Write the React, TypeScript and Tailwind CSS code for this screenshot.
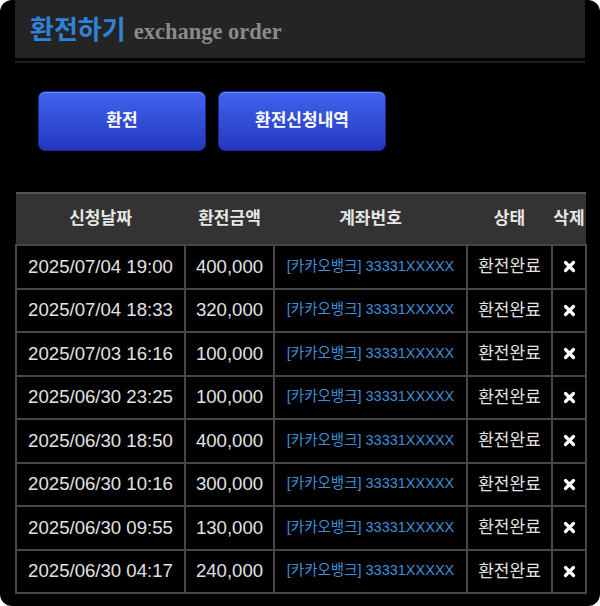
const FONT = '"Liberation Sans", "Noto Sans CJK KR", sans-serif';

interface Row {
  date: string;
  amount: string;
}

const ROWS: Row[] = [
  { date: '2025/07/04 19:00', amount: '400,000' },
  { date: '2025/07/04 18:33', amount: '320,000' },
  { date: '2025/07/03 16:16', amount: '100,000' },
  { date: '2025/06/30 23:25', amount: '100,000' },
  { date: '2025/06/30 18:50', amount: '400,000' },
  { date: '2025/06/30 10:16', amount: '300,000' },
  { date: '2025/06/30 09:55', amount: '130,000' },
  { date: '2025/06/30 04:17', amount: '240,000' },
];

function DeleteIcon() {
  return (
    <svg width="13" height="13" viewBox="0 0 13 13" className="mx-auto">
      <path d="M2.5 2.5 L10.5 10.5 M10.5 2.5 L2.5 10.5" stroke="#fff" strokeWidth="3.2" strokeLinecap="round" />
    </svg>
  );
}

function BlueButton({ label }: { label: string }) {
  return (
    <button
      className="w-[168px] h-[60px] rounded-[7px] border border-[#1c2a9c] bg-gradient-to-b from-[#4064ee] to-[#2536be] text-white text-[17px] font-bold shadow-[inset_0_1px_0_rgba(255,255,255,0.25)]"
      style={{ fontFamily: FONT }}
    >
      {label}
    </button>
  );
}

export default function App() {
  const td = 'border-2 border-[#474747] h-[43.5px] p-0 text-center';
  return (
    <div className="w-[600px] h-[606px] bg-white">
      <div className="h-full bg-black rounded-[12px] overflow-hidden" style={{ fontFamily: FONT }}>
        {/* title bar */}
        <div className="mx-[15px] h-[58px] bg-[#242424] flex items-end pb-[15px] pl-[15px] gap-[8px]">
          <span className="text-[26px] font-bold text-[#2f82d8] leading-none">환전하기</span>
          <span
            className="text-[22.5px] font-bold text-[#8a8a8a] leading-none"
            style={{ fontFamily: '"Liberation Serif", serif' }}
          >
            exchange order
          </span>
        </div>
        <div className="mx-[15px] mt-[3px] h-[2px] bg-[#1f1f1f]" />

        {/* actions */}
        <div className="flex gap-[12px] pl-[38px] mt-[28px]">
          <BlueButton label="환전" />
          <BlueButton label="환전신청내역" />
        </div>

        {/* history table */}
        <table className="mx-[15px] mt-[41px] w-[570px] table-fixed border-collapse">
          <colgroup>
            <col className="w-[169px]" />
            <col className="w-[89px]" />
            <col className="w-[193px]" />
            <col className="w-[85px]" />
            <col className="w-[34px]" />
          </colgroup>
          <thead>
            <tr className="bg-[#333] border-t-2 border-[#575757] h-[52px]">
              {['신청날짜', '환전금액', '계좌번호', '상태', '삭제'].map((h) => (
                <th key={h} className="text-[17px] font-bold text-[#e6e6e6] whitespace-nowrap overflow-hidden p-0">
                  {h}
                </th>
              ))}
            </tr>
          </thead>
          <tbody>
            {ROWS.map((r, i) => (
              <tr key={i}>
                <td className={td + ' text-[18.6px] text-[#e2e2e2]'}>{r.date}</td>
                <td className={td + ' text-[18.6px] text-[#e2e2e2]'}>{r.amount}</td>
                <td className={td + ' text-[14.5px] text-[#3f8fd4] whitespace-nowrap'}>[카카오뱅크] 33331XXXXX</td>
                <td className={td + ' text-[17px] text-[#e2e2e2]'}>환전완료</td>
                <td className={td}>
                  <DeleteIcon />
                </td>
              </tr>
            ))}
          </tbody>
        </table>
      </div>
    </div>
  );
}
